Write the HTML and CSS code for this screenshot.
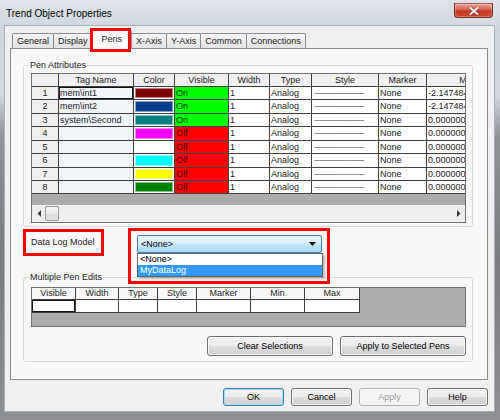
FILE: index.html
```html
<!DOCTYPE html>
<html lang="en">
<head>
<meta charset="utf-8">
<title>Trend Object Properties</title>
<link rel="stylesheet" href="styles.css">
</head>
<body>
<div class="window">
  <header class="titlebar">
    <span class="title">Trend Object Properties</span>
    <button class="close" aria-label="Close">
      <svg width="12" height="10" viewBox="0 0 12 10"><path d="M2 1.5 L10 8.5 M10 1.5 L2 8.5" stroke="#6b1a10" stroke-opacity="0.55" stroke-width="3.6"/><path d="M2 1.5 L10 8.5 M10 1.5 L2 8.5" stroke="#fff" stroke-width="2"/></svg>
    </button>
  </header>
  <main class="client">
    <nav class="tabs">
      <span class="tab">General</span>
      <span class="tab">Display</span>
      <span class="tab sel">Pens</span>
      <span class="tab">X-Axis</span>
      <span class="tab">Y-Axis</span>
      <span class="tab">Common</span>
      <span class="tab">Connections</span>
    </nav>
    <section class="panel">
      <fieldset class="group pen-attr">
        <legend>Pen Attributes</legend>
        <div class="grid">
          <div class="pens">
            <div class="hd"></div><div class="hd">Tag Name</div><div class="hd">Color</div><div class="hd">Visible</div><div class="hd">Width</div><div class="hd">Type</div><div class="hd">Style</div><div class="hd">Marker</div><div class="hd">Min</div>

            <div class="rh">1</div><div class="tag focus">mem\int1</div><div class="clr"><i class="sw maroon"></i></div><div class="on">On</div><div>1</div><div>Analog</div><div class="dash">--------------------</div><div>None</div><div>-2.147484</div>

            <div class="rh">2</div><div class="tag">mem\int2</div><div class="clr"><i class="sw navy"></i></div><div class="on">On</div><div>1</div><div>Analog</div><div class="dash">--------------------</div><div>None</div><div>-2.147484</div>

            <div class="rh">3</div><div class="tag">system\Second</div><div class="clr"><i class="sw teal"></i></div><div class="on">On</div><div>1</div><div>Analog</div><div class="dash">--------------------</div><div>None</div><div>0.000000</div>

            <div class="rh">4</div><div class="tag"></div><div class="clr"><i class="sw magenta"></i></div><div class="off">Off</div><div>1</div><div>Analog</div><div class="dash">--------------------</div><div>None</div><div>0.000000</div>

            <div class="rh">5</div><div class="tag"></div><div class="clr"><i class="sw white"></i></div><div class="off">Off</div><div>1</div><div>Analog</div><div class="dash">--------------------</div><div>None</div><div>0.000000</div>

            <div class="rh">6</div><div class="tag"></div><div class="clr"><i class="sw cyan"></i></div><div class="off">Off</div><div>1</div><div>Analog</div><div class="dash">--------------------</div><div>None</div><div>0.000000</div>

            <div class="rh">7</div><div class="tag"></div><div class="clr"><i class="sw yellow"></i></div><div class="off">Off</div><div>1</div><div>Analog</div><div class="dash">--------------------</div><div>None</div><div>0.000000</div>

            <div class="rh">8</div><div class="tag"></div><div class="clr"><i class="sw green"></i></div><div class="off">Off</div><div>1</div><div>Analog</div><div class="dash">--------------------</div><div>None</div><div>0.000000</div>
          </div>
          <div class="fill"></div>
          <div class="hscroll">
            <span class="sbtn"><svg width="4" height="7" viewBox="0 0 4 7"><path d="M4 0 V7 L0.5 3.5 Z" fill="#3a3a3a"/></svg></span>
            <span class="thumb"></span>
            <span class="track"></span>
            <span class="sbtn"><svg width="4" height="7" viewBox="0 0 4 7"><path d="M0 0 V7 L3.5 3.5 Z" fill="#3a3a3a"/></svg></span>
          </div>
        </div>
      </fieldset>

      <div class="dlrow">
        <span class="dl-label">Data Log Model</span>
        <div class="combo-wrap">
          <div class="combo"><span>&lt;None&gt;</span><svg width="7" height="4" viewBox="0 0 7 4"><path d="M0 0 H7 L3.5 4 Z" fill="#000"/></svg></div>
          <ul class="popup">
            <li>&lt;None&gt;</li>
            <li class="hl">MyDataLog</li>
          </ul>
          <span class="annot"></span>
        </div>
      </div>

      <fieldset class="group multi">
        <legend>Multiple Pen Edits</legend>
        <div class="grid2">
          <div class="edits">
            <div class="hd">Visible</div><div class="hd">Width</div><div class="hd">Type</div><div class="hd">Style</div><div class="hd">Marker</div><div class="hd">Min</div><div class="hd">Max</div>
            <div class="focus"></div><div></div><div></div><div></div><div></div><div></div><div></div>
          </div>
        </div>
        <div class="actions">
          <button class="btn">Clear Selections</button>
          <button class="btn">Apply to Selected Pens</button>
        </div>
      </fieldset>
    </section>
    <div class="dlg-buttons">
      <button class="btn default">OK</button>
      <button class="btn">Cancel</button>
      <button class="btn" disabled>Apply</button>
      <button class="btn">Help</button>
    </div>
  </main>
</div>
</body>
</html>
```

FILE: styles.css
```css
* { box-sizing: border-box; }
html, body { margin: 0; padding: 0; }
body {
  width: 500px;
  height: 420px;
  overflow: hidden;
  font-family: "Liberation Sans", Arial, sans-serif;
  font-size: 9px;
  color: #1b1b1b;
  background: #7b7d81;
}

.window {
  width: 500px;
  height: 420px;
  display: flex;
  flex-direction: column;
  background: linear-gradient(180deg, #dfe4ea 0, #d0d6dd 30px, #d3d9df 95px, #909398 135px, #7a7c80 260px, #8e9094 420px);
}

/* title bar */
.titlebar {
  height: 25px;
  flex: none;
  display: flex;
  align-items: flex-start;
}
.title {
  margin: 8px 0 0 6px;
  font-size: 10px;
  line-height: 12px;
  color: #000;
}
.close {
  margin: 3px 7px 0 auto;
  width: 39px;
  height: 15px;
  padding: 0;
  border: 1px solid #7b2a1f;
  border-top-color: #a0574c;
  border-radius: 0 0 4px 4px;
  background: linear-gradient(180deg, #e9a597 0, #d86a55 40%, #c4361f 55%, #cc4a33 100%);
  box-shadow: inset 0 0 0 1px rgba(255, 255, 255, 0.25);
  display: flex;
  align-items: center;
  justify-content: center;
}

/* client area */
.client {
  flex: 1;
  margin: 0 5px 8px 4px;
  border: 1px solid #a9b1ba;
  background: #f0f0f0;
  padding: 4px 6px 5px 5px;
  display: flex;
  flex-direction: column;
}

/* tabs */
.tabs {
  display: flex;
  align-items: flex-end;
  height: 18px;
  flex: none;
  margin-left: 2px;
  position: relative;
  z-index: 1;
}
.tab {
  height: 15px;
  line-height: 14px;
  padding: 0 4px;
  margin-left: -1px;
  border: 1px solid #898c95;
  border-bottom: none;
  border-radius: 2px 2px 0 0;
  background: linear-gradient(180deg, #f5f5f5, #e3e3e3);
  color: #1b1b1b;
}
.tab:first-child { margin-left: 0; }
.tab.sel {
  height: 19px;
  line-height: 17px;
  margin-bottom: -1px;
  padding: 0 9px;
  background: #fcfcfc;
  position: relative;
  z-index: 2;
}
.tab.sel::after {
  content: "";
  position: absolute;
  left: -3px;
  right: 0;
  top: -3px;
  bottom: -3px;
  border: 3px solid #f00;
}

/* tab page */
.panel {
  height: 332px;
  flex: none;
  border: 1px solid #898c95;
  background: #f8f8f8;
  padding: 10px 14px 0 12px;
}

.group {
  margin: 0;
  min-width: 0;
  border: 1px solid #d3dbe1;
  border-radius: 3px;
}
.group legend {
  padding: 0 1px;
  margin-left: -2px;
  font-size: 9px;
  line-height: 12px;
  color: #1b1b1b;
}
.pen-attr { padding: 2px 6px 3px 7px; }

/* pen grid */
.grid {
  width: 435px;
  height: 150px;
  border: 1px solid #6f6f6f;
  background: #ababab;
  overflow: hidden;
  display: flex;
  flex-direction: column;
}
.pens {
  flex: none;
  width: 475px;
  display: grid;
  grid-template-columns: 27px 75px 41px 54px 41px 42px 67px 48px 80px;
  grid-template-rows: 13px 13px 14px 13px 14px 13px 14px 13px 13px;
}
.pens > div {
  border-right: 1px solid #404040;
  border-bottom: 1px solid #404040;
  background: #fff;
  display: flex;
  align-items: center;
  padding: 0 1px;
  white-space: nowrap;
  overflow: hidden;
  line-height: 11px;
}
.pens > .hd,
.pens > .rh {
  background: #f0f0f0;
  justify-content: center;
}
.pens > .tag { background: #f1f5fa; }
.pens > .focus { box-shadow: inset 0 0 0 1px #111; }
.pens > .clr { padding: 1px; }
.pens > .on { background: #00ff00; color: #0f2a0f; }
.pens > .off { background: #ff0000; color: #4a0000; }
.pens > .dash { color: #555; letter-spacing: -0.5px; padding-left: 2px; }

.sw {
  flex: 1;
  align-self: stretch;
  border: 1px solid rgba(255, 255, 255, 0.5);
}
.maroon { background: #800000; }
.navy { background: #0a3d8c; }
.teal { background: #008080; }
.magenta { background: #ff00ff; }
.white { background: #ffffff; }
.cyan { background: #00ffff; }
.yellow { background: #ffff00; }
.green { background: #008000; }

.fill { height: 11px; flex: none; }
.hscroll {
  height: 17px;
  flex: none;
  display: flex;
  align-items: center;
  background: #eeeeee;
}
.sbtn {
  width: 13px;
  height: 17px;
  display: flex;
  align-items: center;
  justify-content: center;
}
.thumb {
  width: 14px;
  height: 15px;
  border: 1px solid #9a9a9a;
  border-radius: 2px;
  background: linear-gradient(180deg, #f7f7f7, #e8e8e8 50%, #dadada 51%, #e4e4e4);
}
.track { flex: 1; }

/* data log model row */
.dlrow {
  display: flex;
  align-items: flex-start;
  height: 27px;
  margin-top: 2px;
}
.dl-label {
  width: 81px;
  height: 27px;
  border: 3px solid #f00;
  padding-left: 5px;
  line-height: 21px;
  color: #1b1b1b;
}
.combo-wrap {
  position: relative;
  width: 185px;
  height: 18px;
  margin: 6px 0 0 33px;
}
.combo {
  height: 18px;
  border: 1px solid #3c7fb1;
  border-radius: 2px;
  background: linear-gradient(180deg, #eaf6fd 0, #d9f0fc 45%, #bee6fd 55%, #a7d9f5 100%);
  display: flex;
  align-items: center;
  justify-content: space-between;
  padding: 0 5px 0 3px;
  color: #000;
}
.popup {
  position: absolute;
  left: 0;
  top: 18px;
  width: 186px;
  margin: 0;
  padding: 0;
  list-style: none;
  background: #fff;
  border: 1px solid #646464;
  box-shadow: 2px 2px 2px rgba(0, 0, 0, 0.25);
  z-index: 3;
}
.popup li {
  height: 11px;
  line-height: 11px;
  padding-left: 2px;
  color: #000;
}
.popup li.hl { background: #3399ff; color: #fff; }
.annot {
  position: absolute;
  left: -9px;
  right: -8px;
  top: -7px;
  bottom: -31px;
  border: 3px solid #f00;
  z-index: 4;
  pointer-events: none;
}

/* multiple pen edits */
.multi {
  margin-top: 15px;
  padding: 4px 6px 5px 7px;
}
.grid2 {
  width: 435px;
  height: 40px;
  border: 1px solid #6f6f6f;
  background: #ababab;
}
.edits {
  width: 328px;
  display: grid;
  grid-template-columns: 44px 43px 39px 39px 54px 54px 55px;
  grid-template-rows: 12px 13px;
}
.edits > div {
  border-right: 1px solid #404040;
  border-bottom: 1px solid #404040;
  background: #fff;
  display: flex;
  align-items: center;
  justify-content: center;
  line-height: 11px;
}
.edits > .hd { background: #f7f7f7; }
.edits > .focus { box-shadow: inset 0 0 0 1px #111; }

.actions {
  display: flex;
  justify-content: flex-end;
  gap: 7px;
  margin-top: 9px;
}

/* buttons */
.btn {
  font-family: inherit;
  font-size: 9px;
  color: #000;
  height: 20px;
  padding: 0;
  border: 1px solid #707070;
  border-radius: 3px;
  background: linear-gradient(180deg, #f2f2f2 0, #ebebeb 50%, #dddddd 51%, #cfcfcf 100%);
  box-shadow: inset 0 0 0 1px rgba(255, 255, 255, 0.8);
}
.actions .btn { width: 126px; }
.dlg-buttons {
  display: flex;
  justify-content: flex-end;
  gap: 7px;
  margin-top: 8px;
}
.dlg-buttons .btn { width: 61px; height: 18px; }
.btn.default {
  border-color: #3c7fb1;
  box-shadow: inset 0 0 0 1px #9fdcfb;
}
.btn:disabled {
  color: #9d9d9d;
  border-color: #adb2b5;
  background: #f4f4f4;
  box-shadow: none;
}
```
